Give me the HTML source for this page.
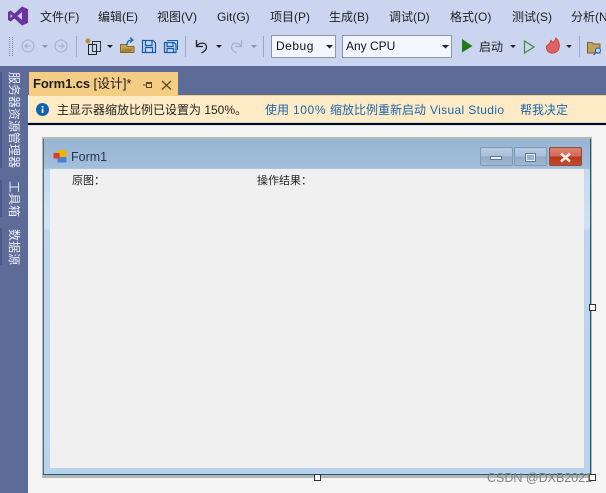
<!DOCTYPE html>
<html><head><meta charset="utf-8">
<style>
*{box-sizing:border-box}
html,body{margin:0;padding:0}
body{width:606px;height:493px;position:relative;overflow:hidden;background:#f5f5f5;font-family:"Liberation Sans","Noto Sans CJK SC",sans-serif;color:#1e1e1e}
.a{position:absolute;white-space:nowrap}
.m{top:9px;font-size:12px;line-height:16px;color:#222}
.v{left:7px;width:13px;font-size:12px;line-height:13px;color:#eef1fb;writing-mode:vertical-rl;text-orientation:sideways}
.d{left:0;width:2px;background:#4d5a8c}
.l{font-size:12px;line-height:16px;color:#1a66ae;top:102px}
.h{width:7px;height:7px;background:#fff;border:1px solid #333}
svg{position:absolute;overflow:visible}
</style></head><body>
<div class="a" style="left:0;top:0;width:606px;height:66px;background:#ccd5f0"></div>
<svg style="left:8px;top:6px" width="20" height="20" viewBox="0 0 20 20"><path d="M14 0.500L20 3V17L14 19.500L6.500 12.500L2.500 15.500L0 14V6L2.500 4.500L6.500 7.500ZM14 6L9.500 10L14 14ZM2.500 8V12L4.500 10Z" fill="#68359f"/></svg>
<span class="a m" style="left:40px">文件(F)</span>
<span class="a m" style="left:98px">编辑(E)</span>
<span class="a m" style="left:157px">视图(V)</span>
<span class="a m" style="left:217px">Git(G)</span>
<span class="a m" style="left:270px">项目(P)</span>
<span class="a m" style="left:329px">生成(B)</span>
<span class="a m" style="left:389px">调试(D)</span>
<span class="a m" style="left:450px">格式(O)</span>
<span class="a m" style="left:512px">测试(S)</span>
<span class="a m" style="left:571px">分析(N)</span>

<svg style="left:0;top:34px" width="606" height="26" viewBox="0 0 606 26">
<path d="M9.500 3V22M12.500 3V22" stroke="#7d88a8" stroke-width="1" stroke-dasharray="1 1"/>
<g fill="none" stroke="#a6afc6" stroke-width="1"><circle cx="28" cy="12" r="6"/><path d="M31 12H25M27.500 9.500L25 12L27.500 14.500"/><circle cx="61" cy="12" r="6"/><path d="M58 12H64M61.500 9.500L64 12L61.500 14.500"/></g>
<path d="M42 11H48L45 14Z" fill="#8b93a8"/>
<path d="M76.500 2V23M185.500 2V23M263.500 2V23M579.500 2V23" stroke="#9aa6c4" stroke-width="1"/>
<path d="M88 3.500l.8 1.700 1.700-.8-.8 1.700 1.700.8-1.700.8.8 1.700-1.700-.8-.8 1.700-.8-1.700-1.700.8.8-1.700-1.700-.8 1.700-.8-.8-1.700 1.700.8z" fill="#b98a2e"/>
<rect x="92.500" y="7.500" width="8" height="10" fill="none" stroke="#333"/>
<rect x="88.500" y="10.500" width="8" height="10" fill="none" stroke="#222"/>
<path d="M107 11H113L110 14Z" fill="#222"/>
<path d="M120.500 10.500H126L127.500 12.500H134V18.500H120.500Z" fill="#c4a058" stroke="#8a6a1d"/><path d="M123 14.500H133L131 18H120.500Z" fill="#a8833a"/>
<path d="M127 11C127 7.500 129 6 132 6M130 3.500L133 6L130 8.500" fill="none" stroke="#1f6cb5" stroke-width="1.300"/>
<path d="M142.500 6.500H153L155.500 9V18.500H142.500ZM145.500 7V11.500H152V7M145.500 18V13.500H152.500V18" fill="none" stroke="#0f5cab" stroke-width="1.200"/>
<path d="M164.500 8.500H174L176 10.500V18.500H164.500ZM167 9V12.500H173V9M167 18V14.500H173.500V18" fill="none" stroke="#0f5cab" stroke-width="1.200"/><path d="M167 6.500H177.500V16" fill="none" stroke="#0f5cab"/>
<path d="M196.500 6V12.500H203M197 12C199.500 8 206.500 8 206.500 13C206.500 15.500 204.500 17.500 201.500 19" fill="none" stroke="#222" stroke-width="1.300"/>
<path d="M216 11H222L219 14Z" fill="#222"/>
<path d="M241.500 6V12.500H235M241 12C238.500 8 231.500 8 231.500 13C231.500 15.500 233.500 17.500 236.500 19" fill="none" stroke="#a6afc6" stroke-width="1.300"/>
<path d="M251 11H257L254 14Z" fill="#8b93a8"/>
<path d="M462 5L472.500 12L462 18.500Z" fill="#1e7b1e"/>
<path d="M510 11H516L513 14Z" fill="#222"/>
<path d="M524.500 7L534 13L524.500 19Z" fill="none" stroke="#3f8f3f" stroke-width="1.200"/>
<path d="M552 8C553 9 555 7 556 4C559 7 560 11 559 14C558 18 554 19.500 551.500 19C547.500 18.500 546 15 546.500 12.500C547 11 549 11 550 9C550.500 8 551 7 551 6Z" fill="#e0636c" stroke="#c24a20"/>
<path d="M566 11H572L569 14Z" fill="#222"/>
<path d="M587.500 8.500H592L593.500 10H600V19H587.500Z" fill="#c4a15a" stroke="#77622f"/><circle cx="598" cy="16.500" r="2.500" fill="#ccd5f0" stroke="#0f5cab"/><path d="M596.200 18.300L593.500 21" stroke="#0f5cab" stroke-width="1.200"/>
</svg>

<div class="a" style="left:271px;top:35px;width:65px;height:23px;background:#f3f6fe;border:1px solid #8d96ae;font-size:12px;line-height:21px;padding-left:4px;color:#111;letter-spacing:.5px">Debug</div>
<svg style="left:326px;top:45px" width="7" height="4"><path d="M0 0H7L3.500 3.500Z" fill="#222"/></svg>
<div class="a" style="left:342px;top:35px;width:110px;height:23px;background:#f3f6fe;border:1px solid #8d96ae;font-size:12px;line-height:21px;padding-left:3px;color:#111">Any CPU</div>
<svg style="left:442px;top:45px" width="7" height="4"><path d="M0 0H7L3.500 3.500Z" fill="#222"/></svg>
<span class="a" style="left:479px;top:39px;font-size:12px;line-height:16px;color:#222">启动</span>

<div class="a" style="left:0;top:66px;width:606px;height:29px;background:#5d6b99"></div>
<div class="a" style="left:0;top:66px;width:28px;height:427px;background:#5d6b99"></div>
<div class="a d" style="top:72px;height:96px"></div>
<div class="a d" style="top:180px;height:37px"></div>
<div class="a d" style="top:228px;height:37px"></div>
<div class="a v" style="top:72px">服务器资源管理器</div>
<div class="a v" style="top:181px">工具箱</div>
<div class="a v" style="top:229px">数据源</div>

<div class="a" style="left:29px;top:72px;width:149px;height:23px;background:#f5cc84"></div>
<span class="a" style="left:33px;top:75px;font-size:13px;line-height:17px;font-weight:bold;color:#1e1e1e;letter-spacing:-.1px">Form1.cs <span style="font-weight:normal">[设计]*</span></span>
<svg style="left:142px;top:79px" width="30" height="14" viewBox="0 0 30 14"><path d="M1 6H4.500M4.500 3.500V8.500H9.500V3.500ZM4.500 4.500H9" fill="none" stroke="#5a4a2a"/><path d="M20 2L29 10.500M29 2L20 10.500" fill="none" stroke="#5a4a2a" stroke-width="1.300"/></svg>
<div class="a" style="left:29px;top:95px;width:577px;height:27px;background:#ffecc7;border-top:1px solid #f5cc84"></div>
<div class="a" style="left:28px;top:122px;width:578px;height:1px;background:#cdd6ee"></div>
<svg style="left:36px;top:103px" width="13" height="13" viewBox="0 0 13 13"><circle cx="6.500" cy="6.500" r="6.500" fill="#0e62b5"/><rect x="5.700" y="5.500" width="1.700" height="4.500" fill="#fff"/><rect x="5.700" y="3" width="1.700" height="1.600" fill="#fff"/></svg>
<span class="a" style="left:57px;top:102px;font-size:12px;line-height:16px;color:#222">主显示器缩放比例已设置为 150%。</span>
<span class="a l" style="left:265px">使用</span>
<span class="a l" style="left:293px;letter-spacing:.6px">100%</span>
<span class="a l" style="left:330px">缩放比例重新启动</span>
<span class="a l" style="left:430px;letter-spacing:.35px">Visual Studio</span>
<span class="a l" style="left:520px">帮我决定</span>
<div class="a" style="left:28px;top:123px;width:578px;height:2px;background:#0a0a0a"></div>
<div class="a" style="left:28px;top:125px;width:578px;height:1px;background:#d9def0"></div>

<!-- form -->
<div class="a" style="left:42px;top:137px;width:550px;height:341px;background:#b6b6b6"></div>
<div class="a" style="left:43px;top:139px;width:548px;height:336px;background:linear-gradient(#98b5d3 0,#a3bedb 29px,#c4daf1 31px,#d0e2f5 88px,#bdd5ee 92px,#b9d3ee 100%);border-right:1px solid #14606e;border-bottom:1px solid #14606e;border-left:1px solid #4f6f80"></div>
<svg style="left:53px;top:150px" width="14" height="13" viewBox="0 0 14 13"><rect x="4.500" y="0" width="9" height="7" fill="#f0b400"/><rect x="4.500" y="7" width="9" height="5.500" fill="#4a80d8"/><rect x="0.500" y="3" width="6" height="5.500" fill="#d83a30"/></svg>
<span class="a" style="left:71px;top:149px;font-size:12.500px;line-height:17px;color:#26364f">Form1</span>

<div class="a" style="left:480px;top:147px;width:33px;height:19px;background:linear-gradient(#b8cbe2 0,#a9c0da 48%,#8ea9c8 52%,#a0b8d3 100%);border:1px solid #7d98b6;border-radius:2px"></div>
<div class="a" style="left:490px;top:156px;width:12px;height:4px;background:#e6edf5;border:1px solid #60788f"></div>
<div class="a" style="left:514px;top:147px;width:33px;height:19px;background:linear-gradient(#b8cbe2 0,#a9c0da 48%,#8ea9c8 52%,#a0b8d3 100%);border:1px solid #7d98b6;border-radius:2px"></div>
<div class="a" style="left:525px;top:153px;width:11px;height:9px;background:#9cb4d0;border:2px solid #e6edf5;outline:1px solid #60788f;outline-offset:-1px"></div>
<div class="a" style="left:549px;top:147px;width:33px;height:19px;background:linear-gradient(#dc8070 0,#d46a58 48%,#b83818 52%,#c8492c 100%);border:1px solid #8d4a40;border-radius:2px"></div>
<svg style="left:560px;top:153px" width="11" height="9" viewBox="0 0 11 9"><path d="M1 .5L10 8.500M10 .5L1 8.500" stroke="#f4ece8" stroke-width="2.600"/></svg>

<div class="a" style="left:50px;top:169px;width:534px;height:299px;background:#f0f0f0"></div>
<span class="a" style="left:72px;top:174px;font-size:11px;line-height:15px;color:#222">原图：</span>
<span class="a" style="left:257px;top:174px;font-size:11px;line-height:15px;color:#222">操作结果：</span>

<div class="a h" style="left:589px;top:304px"></div>
<div class="a h" style="left:314px;top:474px"></div>
<div class="a h" style="left:589px;top:474px"></div>
<span class="a" style="left:487px;top:470px;font-size:12.500px;line-height:16px;color:#808080">CSDN @DXB2021</span>
</body></html>
